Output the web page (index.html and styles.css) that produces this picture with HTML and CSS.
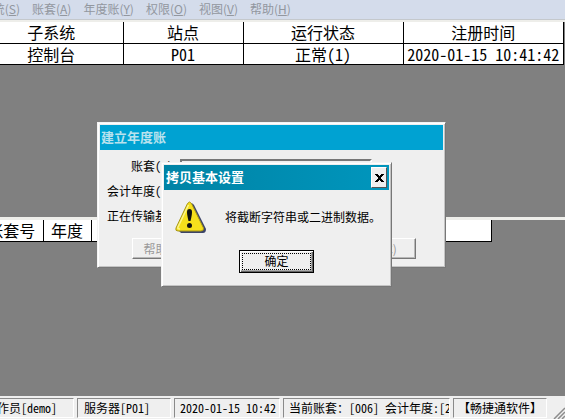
FILE: index.html
```html
<!DOCTYPE html>
<html lang="zh-CN">
<head>
  <meta charset="UTF-8">
  <meta name="viewport" content="width=device-width, initial-scale=1">
  <title>系统管理</title>
  <link rel="stylesheet" href="styles.css">
</head>
<body>

  <nav class="menu">
    <a href="#" class="menu-first">系统(<u>S</u>)</a>
    <a href="#">账套(<u>A</u>)</a>
    <a href="#">年度账(<u>Y</u>)</a>
    <a href="#">权限(<u>O</u>)</a>
    <a href="#">视图(<u>V</u>)</a>
    <a href="#">帮助(<u>H</u>)</a>
  </nav>

  <main class="desktop">
    <section class="pane pane-top">
      <table class="grid tasks">
        <colgroup>
          <col class="col-system">
          <col class="col-site">
          <col class="col-state">
          <col class="col-time">
        </colgroup>
        <tr><th>子系统</th><th>站点</th><th>运行状态</th><th>注册时间</th></tr>
        <tr>
          <td>控制台</td>
          <td><span class="mono">P01</span></td>
          <td>正常<span class="mono">(1)</span></td>
          <td><span class="mono">2020-01-15 10:41:42</span></td>
        </tr>
      </table>
    </section>

    <section class="pane pane-bottom">
      <table class="grid accounts">
        <colgroup>
          <col class="col-number">
          <col class="col-year">
          <col>
        </colgroup>
        <tr><th>账套号</th><th>年度</th><th></th></tr>
      </table>
    </section>
  </main>

  <footer class="status">
    <div class="field field-user"><span>操作员<span class="mono">[demo]</span></span></div>
    <div class="field field-server">服务器<span class="mono">[P01]</span></div>
    <div class="field field-clock"><span class="mono">2020-01-15 10:42</span></div>
    <div class="field field-account">当前账套：<span class="mono">[006] </span>会计年度<span class="mono">:[2020]</span></div>
    <div class="field field-brand">【畅捷通软件】</div>
    <svg class="grip" width="12" height="12" viewBox="0 0 12 12">
      <path d="M1 12L12 1M5 12L12 5M9 12L12 9" stroke="#8c8c8c" stroke-width="1.5"/>
    </svg>
  </footer>

  <!-- 建立年度账 -->
  <div class="window window-year">
    <h2 class="title title-inactive">建立年度账</h2>
    <form class="year-form">
      <label for="account">账套<span class="mono">(A)</span></label>
      <input type="text" id="account">
      <label for="year">会计年度<span class="mono">(Y)</span></label>
      <input type="text" id="year">
      <p class="progress">正在传输基本设置</p>
      <div class="buttons">
        <button type="button" class="help" disabled>帮助(H)</button>
        <button type="button" class="cancel" disabled>取消(C)</button>
      </div>
    </form>
  </div>

  <!-- 拷贝基本设置 -->
  <div class="window window-alert" role="alertdialog" aria-labelledby="alertTitle">
    <div class="title title-active">
      <h2 id="alertTitle">拷贝基本设置</h2>
      <button type="button" class="close" aria-label="关闭">
        <svg width="9" height="8" viewBox="0 0 9 8">
          <path d="M0 0h3v1h1v1h1V1h1V0h3v1H8v1H7v1H6v2h1v1h1v1h1v1H6V7H5V6H4v1H3v1H0V7h1V6h1V5h1V3H2V2H1V1H0z" fill="#000"/>
        </svg>
      </button>
    </div>
    <div class="message">
      <svg width="32" height="32" viewBox="0 0 32 32">
        <path d="M15 3Q17 1 19 4L31 28Q31 32 28 32H6L4 30z" fill="#3c4468"/>
        <path d="M12.500 2.500Q14.500 -0.500 16.500 2.500L28.500 27Q29 30 26 30H3Q0 30 1 27z" fill="#f6e01c" stroke="#a59518"/>
        <path d="M13.500 4L3 26Q2 28 5 28" fill="none" stroke="#fdf58a" stroke-width="1.5"/>
        <path d="M12 11Q12 8 14.500 8T17 11Q17 14 15.500 20H13.500Q12 14 12 11z" fill="#111"/>
        <circle cx="14.500" cy="24.500" r="2.500" fill="#111"/>
      </svg>
      <p>将截断字符串或二进制数据。</p>
    </div>
    <button type="button" class="ok"><span>确定</span></button>
  </div>

</body>
</html>
```
FILE: styles.css
```css
* {
  box-sizing: border-box;
}
body {
  margin: 0;
  height: 100vh;
  display: flex;
  flex-direction: column;
  overflow: hidden;
  background-color: #808080;
  color: #000;
  font-family: "Noto Sans CJK SC", sans-serif;
  font-size: 12px;
  line-height: 16px;
}
h2, p {
  margin: 0;
}
button, input {
  font: inherit;
  margin: 0;
  padding: 0;
}
.mono {
  font-feature-settings: "hwid";
  white-space: pre;
}

/* menu */
.menu {
  display: flex;
  gap: 12px;
  height: 20px;
  background-color: #d4dceb;
  border-bottom: 1px solid #c4c8cc;
  line-height: 18px;
  flex-shrink: 0;
}
.menu a {
  color: #92979f;
  text-decoration: none;
  white-space: nowrap;
}
.menu-first {
  display: flex;
  justify-content: flex-end;
  width: 20px;
}

/* tables */
.desktop {
  flex: 1;
  display: flex;
  flex-direction: column;
}
.pane {
  border-top: 2px solid #eeeeea;
  overflow: hidden;
}
.pane-top {
  height: 197px;
}
.pane-bottom {
  flex: 1;
  border-top-width: 3px;
}
.grid {
  border-collapse: collapse;
  table-layout: fixed;
  margin-left: -20px;
  background-color: #fff;
  font-size: 16px;
  line-height: 20px;
}
.grid th, .grid td {
  height: 21px;
  padding: 0;
  border: 1px solid #000;
  border-left: 0;
  font-weight: 400;
  text-align: center;
  white-space: nowrap;
}
.grid tr:first-child th {
  border-top: 0;
}
.tasks {
  width: calc(100% + 19px);
}
.col-system {
  width: 143px;
}
.col-site {
  width: 120px;
}
.col-state {
  width: 160px;
}
.accounts {
  width: 512px;
}
.col-number {
  width: 63px;
}
.col-year {
  width: 48px;
}

/* status bar */
.status {
  display: flex;
  align-items: center;
  gap: 3px;
  height: 23px;
  padding-right: 18px;
  background-color: #efefef;
  position: relative;
}
.field {
  height: 20px;
  padding: 0 6px;
  border: 1px solid;
  border-color: #8a8a8a #fff #fff #8a8a8a;
  line-height: 18px;
  white-space: nowrap;
  overflow: hidden;
}
.field-user {
  display: flex;
  justify-content: flex-end;
  flex: 0 0 74px;
  padding-right: 16px;
  border-left: 0;
}
.field-server {
  flex: 0 0 94px;
}
.field-clock {
  flex: 0 0 106px;
  padding: 0 5px;
}
.field-account {
  flex: 1;
  padding: 0 0 0 5px;
}
.field-brand {
  flex: 0 0 94px;
  padding: 0 4px;
}
.grip {
  position: absolute;
  right: 0;
  bottom: 0;
}

/* windows */
.window {
  position: absolute;
  padding: 2px;
  background-color: #efefef;
  border: 1px solid;
  border-color: #f4f4f4 #777 #777 #f4f4f4;
  box-shadow: inset 1px 1px #fff, inset -1px -1px #c4c4c4;
}
.window-year {
  left: 97px;
  top: 122px;
  width: 349px;
  height: 146px;
}
.window-alert {
  left: 161px;
  top: 162px;
  width: 231px;
  height: 125px;
}
.title {
  height: 25px;
  padding: 0 2px;
  font-size: 13px;
  font-weight: 700;
  line-height: 24px;
}
.title h2 {
  font-size: 13px;
  line-height: 24px;
}
.title-inactive {
  padding: 0 1px;
  background-color: #00a2d2;
  color: #b9e2ee;
}
.title-active {
  display: flex;
  align-items: center;
  justify-content: space-between;
  background: linear-gradient(to right, #0083a5, #0096bd);
  color: #fff;
}
.title-active h2 {
  margin-bottom: 2px;
}
.close {
  display: flex;
  align-items: center;
  justify-content: center;
  width: 16px;
  height: 21px;
  background-color: #efefef;
  border: 1px solid;
  border-color: #fff #555 #555 #fff;
}
.year-form {
  display: grid;
  grid-template-columns: 73px 192px;
  column-gap: 7px;
  row-gap: 2px;
  padding-top: 6px;
}
.year-form label {
  justify-self: end;
  line-height: 20px;
}
.year-form input {
  height: 20px;
  margin-top: 3px;
  background-color: #efefef;
  border: 2px solid;
  border-color: #777 #fff #fff #777;
}
.progress {
  grid-column: 1 / 3;
  padding-left: 7px;
  line-height: 20px;
}
.buttons {
  grid-column: 1 / 3;
  display: flex;
  justify-content: space-between;
  width: 284px;
  margin-top: 10px;
  margin-left: 32px;
}
.buttons button {
  width: 84px;
  height: 21px;
  background-color: #efefef;
  color: #9a9a9a;
  border: 1px solid;
  border-color: #fff #777 #777 #fff;
  box-shadow: inset -1px -1px #b8b8b8;
}
.buttons .help {
  width: 64px;
}
.buttons .cancel {
  padding-left: 6px;
}
.message {
  display: flex;
  align-items: center;
  gap: 18px;
  padding: 11px 0 0 11px;
}
.message svg {
  flex-shrink: 0;
}
.message p {
  padding-bottom: 1px;
  white-space: nowrap;
}
.ok {
  display: block;
  width: 75px;
  height: 23px;
  margin: 17px auto 0;
  padding: 2px;
  background-color: #efefef;
  border: 1px solid #000;
  box-shadow: inset 1px 1px #fff, inset -1px -1px #666, inset -2px -2px #aaa;
}
.ok span {
  display: block;
  border: 1px dotted #000;
  height: 17px;
  line-height: 14px;
}
```
